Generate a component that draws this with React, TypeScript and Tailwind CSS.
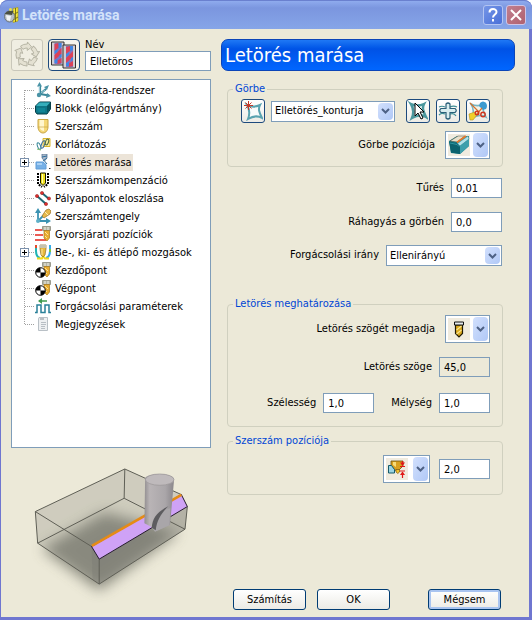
import type { ComponentType, ReactNode } from "react";

/* ---------- icons ---------- */

const Svg = ({ children, size = "size-4", box = "0 0 16 16" }: { children: ReactNode; size?: string; box?: string }) => (
  <svg className={`${size} shrink-0`} viewBox={box} fill="none" aria-hidden="true">
    {children}
  </svg>
);

const AxesIcon = () => (
  <Svg>
    <path d="M5 12V4M5 12l9 1.500M5 12l6-5M5 12l-2 2" stroke="#3a8799" strokeWidth="2.200" />
    <path d="M2 4.500L4.500 0 7 4.500zM9 5l5-2-2 5zM12 11l4 3-5 2z" fill="#4a93a6" />
    <path d="M4.500 4v7M6 11l4-3" stroke="#b6dce6" strokeWidth=".8" />
    <circle cx="4" cy="13" r="2.200" fill="#4a93a6" />
  </Svg>
);
const BlockIcon = () => (
  <Svg>
    <path d="M.5 6l4-4h11v7l-3.500 5H2L.5 12z" fill="#0d7686" stroke="#07404a" />
    <path d="M1 6l3.500-3.500H15L12 6z" fill="#35aebb" />
    <path d="M12 6l3-3v6l-3 4z" fill="#075763" />
    <path d="M2 8h8v4H3z" fill="#118596" />
  </Svg>
);
const ToolIcon = () => (
  <Svg>
    <path d="M3 1.500h10V9c0 3-2 6-5 6S3 12 3 9z" fill="#f5d877" stroke="#c9a646" />
    <path d="M4.500 2H9v11C6 12.500 4.500 11 4.500 8z" fill="#fff6cf" />
    <path d="M3 9h10" stroke="#c9a646" strokeWidth=".7" />
  </Svg>
);
const LimitIcon = () => (
  <Svg>
    <path d="M8 2.500h7v8H8z" fill="#f8ec9a" stroke="#d8b52c" />
    <ellipse cx="4" cy="10" rx="1.500" ry="3.500" transform="rotate(-20 4 10)" stroke="#3d8a9b" />
    <ellipse cx="8" cy="8.500" rx="1.500" ry="4" transform="rotate(20 8 8.500)" stroke="#3d6d9b" />
    <ellipse cx="12" cy="6" rx="1.500" ry="3" transform="rotate(20 12 6)" stroke="#4f6a40" />
    <path d="M2 13l4 1" stroke="#7dbb6a" />
  </Svg>
);
const ChamferIcon = () => (
  <Svg>
    <path d="M1 8h7l3 2.500V15H1z" fill="#76b0e6" stroke="#5f9cd8" />
    <path d="M2 9h5v2H2z" fill="#a9d0f4" />
    <path d="M7 0h5v4L9.500 7 7 4z" fill="#a9b8c9" stroke="#5b7796" strokeWidth=".8" />
    <path d="M7 3l5-1M8 7l4-3M9.500 7l2.500 3" stroke="#2f6e9c" />
    <path d="M14 14h1.500v1H14z" fill="#333" />
  </Svg>
);
const CompensationIcon = () => (
  <Svg>
    <path d="M5.500 1h5v10L8 13.500 5.500 11z" fill="#f2e21d" stroke="#1b1b00" />
    <path d="M7.500 2v9" stroke="#fffbb0" />
    <path d="M3 1v11l4 3M13 1v11l-4 3" stroke="#000" strokeWidth="2" strokeDasharray="2 1" />
  </Svg>
);
const PointsIcon = () => (
  <Svg>
    <path d="M2 6l9 8M7 3l7 6" stroke="#1f6a77" strokeWidth="2" />
    <g fill="#e03030" stroke="#8c1010" strokeWidth=".5">
      <circle cx="2" cy="6" r="1.600" />
      <circle cx="11" cy="14" r="1.600" />
      <circle cx="7" cy="3" r="1.600" />
      <circle cx="14" cy="8.500" r="1.600" />
    </g>
  </Svg>
);
const ToolAxisIcon = () => (
  <Svg>
    <path d="M3 3v10h11M3 13l6-6" stroke="#3d93b3" strokeWidth="1.800" />
    <path d="M0 5l3-5 3 5zM11 10l5 3-5 3z" fill="#3d93b3" />
    <path d="M7 8l4-6 3-1 2 2-1 3-6 4z" fill="#e7b94b" stroke="#96702a" strokeWidth=".7" />
    <path d="M10 4l3 3" stroke="#fff1b0" />
    <circle cx="3" cy="13" r="2" fill="#5fb0c8" />
  </Svg>
);
const MiniTool = () => (
  <>
    <path d="M7.500 .5h8v4h-8z" fill="#b4b4a4" stroke="#7f7f70" strokeWidth=".7" />
    <path d="M10 1v3M13 1v3" stroke="#f0f0e6" />
    <path d="M9 4.500h5.500V12L12 15l-3-3z" fill="#e9ad2f" stroke="#a8781c" strokeWidth=".7" />
    <path d="M10 6l3 3M10 10l2 2" stroke="#fbe09a" />
  </>
);
const RapidIcon = () => (
  <Svg>
    <path d="M0 4h7M0 9h8M0 14h11" stroke="#e3261c" strokeWidth="1.600" />
    <MiniTool />
  </Svg>
);
const LinkIcon = () => (
  <Svg>
    <path d="M1 1v6c0 4 1 6 4 7" stroke="#22b4b4" strokeWidth="2" />
    <path d="M1 1v3" stroke="#e34b2b" strokeWidth="2" />
    <path d="M15 1v6c0 4-1 6-4 7" stroke="#35a9e8" strokeWidth="2" />
    <path d="M15 5v3" stroke="#7cc544" strokeWidth="2" />
    <path d="M2 14.500h5L8 12l2 2.500h4" stroke="#f2d91b" strokeWidth="2" />
    <path d="M5 1h6v4l-1 6-2 2-2-2-1-6z" fill="#e9b93c" stroke="#8b6f28" strokeWidth=".7" />
    <path d="M5 1h6v3H5z" fill="#c4c2ae" />
    <path d="M7 5v6" stroke="#fbe9a8" />
  </Svg>
);
const PointIcon = () => (
  <Svg>
    <MiniTool />
    <circle cx="5.500" cy="10.500" r="4.800" fill="#fff" stroke="#000" />
    <path d="M5.500 10.500V5.700a4.800 4.800 0 0 0-4.800 4.800zM5.500 10.500v4.800a4.800 4.800 0 0 0 4.800-4.800z" fill="#000" />
  </Svg>
);
const CuttingIcon = () => (
  <Svg>
    <path d="M0 14.500h2V7h4v7.500h4V7h4v7.500h2" stroke="#2a8099" strokeWidth="1.500" />
    <path d="M4 3h8" stroke="#3f9b4e" strokeWidth="1.500" />
    <path d="M3 3l4-3v6z" fill="#3f9b4e" />
  </Svg>
);
const NotesIcon = () => (
  <Svg>
    <path d="M4 1.500h8.500v13h-9V3z" fill="#eef0f2" stroke="#b9c0c6" />
    <path d="M5 2h4v2H5z" fill="#b9bec3" />
    <path d="M6 6.500h5M6 8.500h5M6 10.500h4M6 12.500h4" stroke="#a9b1b7" strokeWidth=".8" />
  </Svg>
);

const AppIcon = () => (
  <Svg>
    <path d="M9 1.500l5-1V14l-5 1.500z" fill="#f3e43a" stroke="#a79a13" strokeWidth=".6" />
    <path d="M11.500 1v14M9 8l5-3M9 13l5-3" stroke="#6e6912" strokeWidth=".9" />
    <ellipse cx="5.500" cy="9.500" rx="5" ry="5.500" fill="#b8bfc4" stroke="#5d666b" strokeWidth=".8" />
    <path d="M.5 7c2-3 5-4 9-3L8 8z" fill="#4a4f42" />
    <path d="M2 8l5 1-1 5-3-1z" fill="#f1f3f5" />
    <circle cx="6.500" cy="2.500" r="1.500" fill="#e8df4b" />
  </Svg>
);

const CycleIcon = () => (
  <Svg size="size-7" box="0 0 28 28">
    <g stroke="#b4b2a2" strokeWidth=".9" fill="#e4e1d2" strokeLinejoin="round">
      {[-6, 66, 138, 210, 282].map((a) => (
        <path
          key={a}
          transform={`rotate(${a} 14 14)`}
          d="M8.500 4.500A11 11 0 0 1 15.500 3.100L15.800 1.100 19.500 6.500 14.700 9.500 15 7.100A7 7 0 0 0 10.500 7.900z"
        />
      ))}
    </g>
  </Svg>
);
const Panel = ({ x, y }: { x: number; y: number }) => (
  <g transform={`translate(${x} ${y})`}>
    <path d="M0 0h12.500v23H0z" fill="#d3cdd2" stroke="#222" strokeWidth=".9" />
    <path d="M3 1h7v21H3z" fill="#7f74c4" />
    <path d="M3 2l4-1 1 4-5 4zM10 6v6l-7 6v-5zM10 16v5l-4 1-1-3z" fill="#dc4258" />
    <path d="M7 1h3v4L7 6zM3 9l3-2v3l-3 2zM8 13l2-1v3l-2 1zM3 18l3-1v4H3z" fill="#3f86e4" />
  </g>
);
const PanelsIcon = () => (
  <Svg size="size-7" box="0 0 28 28">
    <Panel x={1.5} y={1} />
    <Panel x={13} y={4} />
  </Svg>
);

const STAR = "M3 3c4 2 9 2 13 0-2 4-1 7 2 13-5-3-9-2-14 1 2-5 2-9-1-14z";

const NewCurveIcon = () => (
  <Svg size="size-5" box="0 0 20 20">
    <path d={STAR} fill="#f8fbfb" stroke="#5aa3b0" strokeWidth="2" transform="translate(1 1)" />
    <path d="M5.500 0v9M1 4.500h9M2.500 1.500l6 6M8.500 1.500l-6 6" stroke="#c23a2c" />
  </Svg>
);
const PickCurveIcon = () => (
  <Svg size="size-5" box="0 0 20 20">
    <path d={STAR} fill="#eaf5f4" stroke="#4b979d" strokeWidth="2.500" />
    <path d="M7 2v13l3-3 3 6 2-1-3-6h4z" fill="#fff" stroke="#000" />
  </Svg>
);
const CrossCurveIcon = () => (
  <Svg size="size-5" box="0 0 20 20">
    <path d="M1 6c2-1 4-1 6 0M1 14c2-2 4-2 6-1M12 6c2-1 5-1 7 0M12 13c3-1 5 0 6 2" stroke="#3f8e95" strokeWidth="1.200" />
    <path d="M8 3q2-2 4 0v4.500h5q2.500 2 0 4h-5V17q-2 2-4 0v-5.500H3q-2.500-2 0-4h5z" fill="#d9edef" stroke="#2a5f78" strokeWidth="1.200" />
  </Svg>
);
const DeleteCurveIcon = () => (
  <Svg size="size-5" box="0 0 20 20">
    <path d={STAR} fill="#f4f3e8" stroke="#7ab6c2" strokeWidth="1.500" />
    <path d="M12 2q3-3 6 0 2 3 0 6l-3 1-4-4z" fill="#3b9ad0" />
    <path d="M2 2l9 9M14 7l-5 6" stroke="#d5722c" strokeWidth="1.200" />
    <path d="M1 13l6-2 2 3-4 5H2z" fill="#f0cf2b" stroke="#b7961c" strokeWidth=".6" />
    <circle cx="9" cy="12" r="1.800" stroke="#d3361e" strokeWidth="1.400" />
    <circle cx="15" cy="13.500" r="2.200" stroke="#d3361e" strokeWidth="1.400" />
  </Svg>
);

const EdgeIcon = () => (
  <Svg size="size-[22px]" box="0 0 22 22">
    <path d="M1 7l8-5h12v10l-9 8-9-1z" fill="#137b86" />
    <path d="M2 7l8-5h7L9 8z" fill="#e6e0cc" stroke="#4c4a3c" strokeWidth=".5" />
    <path d="M9 8.500L18 2" stroke="#e8792a" strokeWidth="2" />
    <path d="M9.500 9.500L20 2l1 3-9 7z" fill="#b4e2e8" stroke="#4b99a4" strokeWidth=".6" />
    <path d="M12 12l9-7v7l-9 8z" fill="#3d9fab" />
    <path d="M1 7.500l8 2 3 3v7.500L3 18.500z" fill="#0b626e" />
    <path d="M2 9l7 1.500 2 2" stroke="#2f96a2" />
  </Svg>
);
const AngleToolIcon = () => (
  <Svg size="size-[22px]" box="0 0 22 22">
    <path d="M7.500 7h7v8.500L11 19l-3.500-3.500z" fill="#dba91e" stroke="#221a05" strokeWidth="1.200" />
    <path d="M6.500 4h9v3h-9z" fill="#e4e9ee" stroke="#111" />
    <path d="M8.500 12l5-4M8.500 16l5-4" stroke="#fbe591" strokeWidth="1.200" />
  </Svg>
);
const OffsetToolIcon = () => (
  <Svg size="size-[22px]" box="0 0 22 22">
    <path d="M5 3h12v5l-4 4-2 1-2-1-4-4z" fill="#d9a01f" stroke="#6b5010" strokeWidth=".8" />
    <path d="M7 4h3v5L7 7z" fill="#f8dc7a" />
    <path d="M2.500 7.500h3l3 4V15h-6z" fill="#9cd4e2" stroke="#155a6a" />
    <path d="M10 11.500h3.500V14l-1.700 1.500L10 14z" fill="#f0c12c" stroke="#7b5810" strokeWidth=".7" />
    <path d="M14 8.500h5M16.500 3v4M14 13h5M16.500 14v6" stroke="#e01818" strokeWidth="1.200" />
    <path d="M14 4.500h5L16.500 8zM14 17h5l-2.500-3.500z" fill="#e01818" />
  </Svg>
);

const Preview = () => (
  <svg className="ml-5 w-[163px] shrink-0" viewBox="90 70 490 430" aria-hidden="true">
    <defs>
      <filter id="shade" x="-20%" y="-30%" width="140%" height="160%">
        <feGaussianBlur stdDeviation="20" />
      </filter>
      <linearGradient id="steel" x1="0" x2="1">
        <stop offset="0" stopColor="#938f91" />
        <stop offset=".18" stopColor="#b9b4b6" />
        <stop offset=".7" stopColor="#aaa6a9" />
        <stop offset="1" stopColor="#8b878b" />
      </linearGradient>
    </defs>
    <path d="M122 325L310 215l225 60-240 175z" fill="#55564e" opacity=".65" filter="url(#shade)" />
    <path d="M103 213L372 85l170 77 18 36-7 68-258 165-185-123z" fill="#8a8a82" opacity=".3" />
    <path d="M272 318l23 38 265-158-7 68-258 165-20-14z" fill="#77786f" opacity=".3" />
    <path d="M103 213L372 85l170 77M103 213l7 95 185 123 258-165 7-68M103 213l169 105M372 85l-2 88-260 135M370 173l183 93M295 356v75" fill="none" stroke="#5e5e55" strokeWidth="3" />
    <path d="M272 318l270-156 18 36-265 158z" fill="#cfa2f6" stroke="#241c2c" strokeWidth="3" />
    <path d="M273 316l269-153" stroke="#e58b16" strokeWidth="8" />
    <path d="M433 115c0-20 87-20 87 3l-12 135-45 19-2-8-30-16z" fill="url(#steel)" />
    <ellipse cx="477" cy="117" rx="43" ry="17" fill="#bfbabc" stroke="#989496" strokeWidth="2" />
    <path d="M453 262c6-32 20-45 56-60l-3 52-43 20z" fill="#a9a6a9" />
    <path d="M453 262c2-30 16-48 50-65-20 20-35 42-38 72z" fill="#5d5c5f" />
  </svg>
);

/* ---------- controls ---------- */

const Chevron = ({ tall = false }: { tall?: boolean }) => (
  <span
    className={`pointer-events-none absolute right-px flex w-[15px] items-center justify-center rounded-sm bg-linear-to-br from-[#d2e0fd] to-[#b0c8f6] ${tall ? "top-px h-6" : "top-0.5 mr-px h-[17px]"}`}
  >
    <svg className="w-[9px]" viewBox="0 0 9 6" fill="none" aria-hidden="true">
      <path d="M1 1l3.500 3.500L8 1" stroke="#4d6185" strokeWidth="2" />
    </svg>
  </span>
);

const TextSelect = ({ id, value, width, label }: { id: string; value: string; width: string; label?: string }) => (
  <div className={`relative ${width}`}>
    <select id={id} aria-label={label} className="block h-[21px] w-full appearance-none border border-[#7f9db9] bg-white pl-[3px] pr-5 leading-4">
      <option>{value}</option>
    </select>
    <Chevron />
  </div>
);

const IconSelect = ({ id, value, Icon, width, label }: { id: string; value: string; Icon: ComponentType; width: string; label?: string }) => (
  <div className={`relative flex h-7 items-center border border-[#7f9db9] bg-white pl-0.5 ${width}`}>
    <span className="bg-[#f0ebdf]">
      <Icon />
    </span>
    <Chevron tall />
    <select id={id} aria-label={label} className="absolute inset-0 size-full appearance-none opacity-0">
      <option>{value}</option>
    </select>
  </div>
);

const NumberField = ({ id, value, readOnly = false, label }: { id: string; value: string; readOnly?: boolean; label?: string }) => (
  <input
    id={id}
    aria-label={label}
    defaultValue={value}
    readOnly={readOnly}
    className={`h-5 w-[51px] border border-[#7f9db9] px-1 leading-4 ${readOnly ? "bg-[#ece9d8]" : "bg-white"}`}
  />
);

const IconButton = ({ label, Icon }: { label: string; Icon: ComponentType }) => (
  <button aria-label={label} className="flex size-6 items-center justify-center rounded-[3px] border border-[#1d4a7d] bg-linear-to-b from-white to-[#ecebe5]">
    <Icon />
  </button>
);

const Group = ({ title, children, className }: { title: string; children: ReactNode; className: string }) => (
  <fieldset className={`min-w-0 rounded-[4px] border border-[#d0d0bf] pl-[13px] pr-3 ${className}`}>
    <legend className="-ml-2 px-0.5 leading-4 text-[#0046d5]">{title}</legend>
    {children}
  </fieldset>
);

const Row = ({ children, className = "" }: { children: ReactNode; className?: string }) => (
  <div className={`flex items-center justify-end ${className}`}>{children}</div>
);

const CommandButton = ({ children, focused = false }: { children: ReactNode; focused?: boolean }) => (
  <button
    className={`h-[21px] w-[73px] rounded-[3px] border border-[#003c74] bg-linear-to-b from-white to-[#ecebe5] leading-4 ${focused ? "shadow-[inset_0_0_0_2px_#a9c4f0]" : ""}`}
  >
    {children}
  </button>
);

/* ---------- tree ---------- */

type Node = { name: string; Icon: ComponentType; expandable?: boolean; selected?: boolean };

const nodes: Node[] = [
  { name: "Koordináta-rendszer", Icon: AxesIcon },
  { name: "Blokk (előgyártmány)", Icon: BlockIcon },
  { name: "Szerszám", Icon: ToolIcon },
  { name: "Korlátozás", Icon: LimitIcon },
  { name: "Letörés marása", Icon: ChamferIcon, expandable: true, selected: true },
  { name: "Szerszámkompenzáció", Icon: CompensationIcon },
  { name: "Pályapontok eloszlása", Icon: PointsIcon },
  { name: "Szerszámtengely", Icon: ToolAxisIcon },
  { name: "Gyorsjárati pozíciók", Icon: RapidIcon },
  { name: "Be-, ki- és átlépő mozgások", Icon: LinkIcon, expandable: true },
  { name: "Kezdőpont", Icon: PointIcon },
  { name: "Végpont", Icon: PointIcon },
  { name: "Forgácsolási paraméterek", Icon: CuttingIcon },
  { name: "Megjegyzések", Icon: NotesIcon },
];

const Branch = ({ first, last, expandable }: { first: boolean; last: boolean; expandable?: boolean }) => (
  <svg className="h-[18px] w-[15px] shrink-0" viewBox="0 0 15 18" fill="none" shapeRendering="crispEdges" aria-hidden="true">
    <path d={first ? "M4.500 9V18" : last ? "M4.500 0V10" : "M4.500 0V18"} stroke="#a0a0a0" strokeDasharray="1 1" />
    <path d="M5 9.500H15" stroke="#a0a0a0" strokeDasharray="1 1" />
    {expandable && (
      <>
        <path d="M.5 5.500h8v8h-8z" fill="#fff" stroke="#7b91ad" />
        <path d="M2 9.500h5M4.500 7v5" stroke="#000" />
      </>
    )}
  </svg>
);

const Tree = () => (
  <ul role="tree" aria-label="Letörés marása" className="flex-1 border border-[#7f9db9] bg-white pb-2 pl-2 pt-px">
    {nodes.map(({ name, Icon, expandable, selected }, i) => (
      <li key={name} role="treeitem" aria-selected={!!selected} className="flex h-[18px] items-center whitespace-nowrap">
        <Branch first={i === 0} last={i === nodes.length - 1} expandable={expandable} />
        <Icon />
        <span className={`ml-[3px] px-px leading-[17px] ${selected ? "bg-[#ece4d8]" : ""}`}>{name}</span>
      </li>
    ))}
  </ul>
);

/* ---------- dialog ---------- */

export default function App() {
  return (
    <div className="flex min-h-screen flex-col rounded-t-lg bg-[#6f76d0] font-['DejaVu_Sans_Condensed','DejaVu_Sans',sans-serif] text-[11px] text-black">
      <header className="flex h-[29px] items-center gap-0.5 rounded-t-lg border-t border-[#6a80cf] bg-linear-to-b from-[#8fabee] via-[#7b96df] via-25% to-[#86a5e8] pl-1 pr-1.5">
        <AppIcon />
        <h1 className="flex-1 font-[Roboto,sans-serif] text-[14px] font-bold leading-5 text-[#d3e3fa]">Letörés marása</h1>
        <button aria-label="Súgó" className="flex size-5 items-center justify-center rounded-[3px] border border-[#b3c4f2] bg-linear-to-br from-[#7595e6] to-[#4a6fd8]">
          <svg className="size-4" viewBox="0 0 16 16" fill="none" aria-hidden="true">
            <path d="M4.500 5.500C4.500 1 11.500 1 11.500 5c0 2.500-3.500 2.500-3.500 5.500M8 12v2.500" stroke="#fff" strokeWidth="2" />
          </svg>
        </button>
        <button aria-label="Bezárás" className="ml-px flex size-5 items-center justify-center rounded-[3px] border border-[#d0c4e4] bg-linear-to-br from-[#c07f8f] to-[#b0616f]">
          <svg className="size-4" viewBox="0 0 16 16" fill="none" aria-hidden="true">
            <path d="M3 3l10 10M13 3L3 13" stroke="#fff" strokeWidth="2" />
          </svg>
        </button>
      </header>

      <main className="mb-[3px] ml-px mr-[3px] flex flex-1 gap-2.5 bg-[#ece9d8] pl-2.5 pr-3.5 pt-2.5">
        <section className="flex w-[200px] shrink-0 flex-col">
          <div className="mb-2 flex h-8 gap-[5px]">
            <button disabled aria-label="Frissítés" className="flex size-8 items-center justify-center rounded-[3px] border border-[#c9c7ba] bg-[#f0eee2]">
              <CycleIcon />
            </button>
            <button aria-label="Panelek" className="flex size-8 items-center justify-center rounded-[4px] border border-[#1d4a7d] bg-[#f4f3ec]">
              <PanelsIcon />
            </button>
            <div className="flex min-w-0 flex-1 flex-col justify-end">
              <label htmlFor="name" className="leading-3">Név</label>
              <input id="name" defaultValue="Elletöros" className="h-5 w-full border border-[#7f9db9] bg-white px-1 leading-4" />
            </div>
          </div>
          <Tree />
          <div className="pb-2.5 pt-4">
            <Preview />
          </div>
        </section>

        <section className="flex min-w-0 flex-1 flex-col">
          <h2 className="h-8 rounded-[7px] border border-[#0b45b8] bg-linear-to-b from-[#1f78f5] via-[#0052e6] via-30% to-[#0066ff] px-[3px] text-[20px] leading-[30px] text-white">
            Letörés marása
          </h2>

          <div className="flex flex-1 flex-col pl-1.5 pr-3">
            <Group title="Görbe" className="mt-2.5 pb-[7px]">
              <div className="flex items-center gap-1.5 pt-0.5">
                <IconButton label="Új görbe" Icon={NewCurveIcon} />
                <TextSelect id="curve" label="Görbe" value="Elletörés_konturja" width="min-w-0 flex-1" />
                <div className="flex gap-1.5 pl-[5px]">
                  <IconButton label="Kijelölés" Icon={PickCurveIcon} />
                  <IconButton label="Összekapcsolás" Icon={CrossCurveIcon} />
                  <IconButton label="Törlés" Icon={DeleteCurveIcon} />
                </div>
              </div>
              <Row className="mt-2 gap-2.5">
                <label htmlFor="curve-position">Görbe pozíciója</label>
                <IconSelect id="curve-position" value="Él" Icon={EdgeIcon} width="w-[45px]" />
              </Row>
            </Group>

            <div className="pr-px">
              <Row className="mt-[11px] gap-[7px]">
                <label htmlFor="tolerance">Tűrés</label>
                <NumberField id="tolerance" value="0,01" />
              </Row>
              <Row className="mt-3.5 gap-[7px]">
                <label htmlFor="allowance">Ráhagyás a görbén</label>
                <NumberField id="allowance" value="0,0" />
              </Row>
              <Row className="mt-[13px] gap-[7px]">
                <label htmlFor="direction">Forgácsolási irány</label>
                <TextSelect id="direction" value="Ellenirányú" width="w-[116px]" />
              </Row>
            </div>

            <Group title="Letörés meghatározása" className="mt-[30px] pb-[13px]">
              <Row className="gap-2.5 pt-[3px]">
                <label htmlFor="angle-mode">Letörés szögét megadja</label>
                <IconSelect id="angle-mode" value="Szög" Icon={AngleToolIcon} width="w-[45px]" />
              </Row>
              <Row className="mt-3.5 gap-[7px]">
                <label htmlFor="angle">Letörés szöge</label>
                <NumberField id="angle" value="45,0" readOnly />
              </Row>
              <Row className="mt-4 gap-[7px]">
                <label htmlFor="width">Szélesség</label>
                <NumberField id="width" value="1,0" />
                <label htmlFor="depth" className="pl-2.5">Mélység</label>
                <NumberField id="depth" value="1,0" />
              </Row>
            </Group>

            <Group title="Szerszám pozíciója" className="mt-1.5 pb-[11px]">
              <Row className="gap-[9px] pt-1.5">
                <IconSelect id="tool-mode" label="Szerszám pozíciója" value="Eltolás" Icon={OffsetToolIcon} width="w-[47px]" />
                <NumberField id="tool-offset" label="Eltolás" value="2,0" />
              </Row>
            </Group>

            <footer className="mt-auto flex justify-end gap-[11px] pb-[7px] pr-0.5">
              <CommandButton>Számítás</CommandButton>
              <CommandButton>OK</CommandButton>
              <div className="pl-[27px]">
                <CommandButton focused>Mégsem</CommandButton>
              </div>
            </footer>
          </div>
        </section>
      </main>
    </div>
  );
}
